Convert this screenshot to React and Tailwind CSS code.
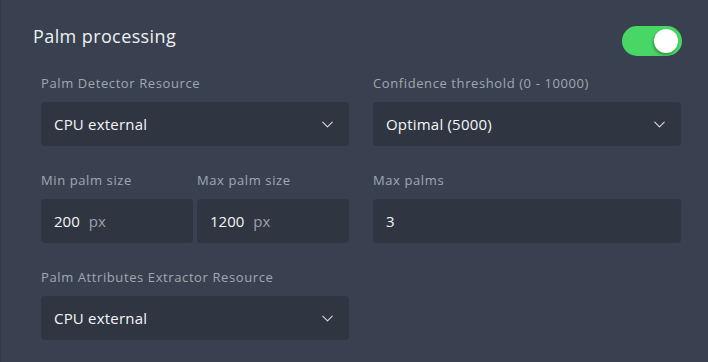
import { ChevronDown } from "lucide-react";

const font = { fontFamily: '"Open Sans", "Liberation Sans", sans-serif' };

function Label({ children }) {
    return (
        <div className="text-[13px] leading-4 text-[#a1a7b1] tracking-[0.6px] mb-[11px] whitespace-nowrap">
            {children}
        </div>
    );
}

function Select({ value }) {
    return (
        <div className="h-11 rounded bg-[#2f3541] flex items-center justify-between pl-[13px] pr-[12px]">
            <span className="text-[15px] text-[#f4f5f7] tracking-[0.2px]">{value}</span>
            <ChevronDown size={19} strokeWidth={1.3} className="text-[#dcdfe4]" />
        </div>
    );
}

function NumberInput({ value, unit, className = "" }) {
    return (
        <div className={`h-11 rounded bg-[#2f3541] flex items-center pl-[13px] gap-[9px] ${className}`}>
            <span className="text-[15px] font-medium text-[#f4f5f7]">{value}</span>
            {unit && <span className="text-[15px] text-[#9ba1ab]">{unit}</span>}
        </div>
    );
}

export default function App() {
    return (
        <div
            className="w-[708px] h-[362px] bg-[#394150] border-l border-[#323946] pl-[32px] pr-[26px] pt-[24px]"
            style={font}
        >
            {/* Header */}
            <div className="flex items-start justify-between">
                <h2 className="text-[18px] leading-6 text-[#eef0f3] tracking-[0.4px]">Palm processing</h2>
                <button className="mt-[2px] w-[60px] h-[30px] rounded-full bg-[#48d764] flex items-center justify-end pr-[4px]">
                    <span className="w-[24px] h-[24px] rounded-full bg-white shadow-[-1px_2px_3px_rgba(0,0,0,0.3)]" />
                </button>
            </div>

            {/* Fields */}
            <div className="grid grid-cols-2 gap-x-6 gap-y-[26px] pl-2 pr-px mt-[19px]">
                <div>
                    <Label>Palm Detector Resource</Label>
                    <Select value="CPU external" />
                </div>
                <div>
                    <Label>Confidence threshold (0 - 10000)</Label>
                    <Select value="Optimal (5000)" />
                </div>
                <div className="grid grid-cols-2 gap-x-1">
                    <div>
                        <Label>Min palm size</Label>
                        <NumberInput value="200" unit="px" />
                    </div>
                    <div>
                        <Label>Max palm size</Label>
                        <NumberInput value="1200" unit="px" />
                    </div>
                </div>
                <div>
                    <Label>Max palms</Label>
                    <NumberInput value="3" />
                </div>
                <div>
                    <Label>Palm Attributes Extractor Resource</Label>
                    <Select value="CPU external" />
                </div>
            </div>
        </div>
    );
}
